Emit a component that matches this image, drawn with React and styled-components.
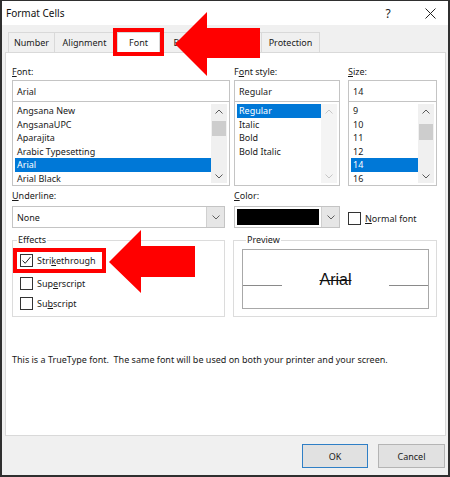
import React from "react";
import styled, { createGlobalStyle } from "styled-components";

const GlobalStyle = createGlobalStyle`
  html, body {
    margin: 0;
    padding: 0;
    background: #fff;
  }
  body {
    font-family: "Noto Sans", "Liberation Sans", sans-serif;
    color: #1a1a1a;
  }
  u {
    text-decoration-thickness: 1px;
    text-underline-offset: 1px;
  }
`;

const Window = styled.div`
  position: relative;
  width: 450px;
  height: 477px;
  box-sizing: border-box;
  border: 2px solid #2f2f2f;
  border-top-width: 1px;
  background: #f0f0f0;
  display: flex;
  flex-direction: column;
  overflow: hidden;
`;

const TitleBar = styled.div`
  height: 24px;
  flex: none;
  background: #fff;
  display: flex;
  align-items: center;
  padding-left: 4px;
  font-size: 10px;
  color: #111;
`;

const TitleText = styled.div`
  flex: 1;
`;

const TitleButton = styled.div`
  width: 36px;
  height: 24px;
  margin-right: ${(p) => p.$mr || 0}px;
  display: flex;
  align-items: center;
  justify-content: center;
  font-size: 12px;
  color: #222;
`;

const Client = styled.div`
  flex: 1;
  display: flex;
  flex-direction: column;
  padding: 0 2px 0 3px;
`;

const TabStrip = styled.div`
  height: 27px;
  flex: none;
  display: flex;
  align-items: flex-end;
  padding-left: 3px;
`;

const Tab = styled.div`
  position: relative;
  width: ${(p) => p.$w}px;
  height: 20px;
  box-sizing: border-box;
  margin: 0 ${(p) => (p.$active ? 2 : 0)}px;
  display: flex;
  align-items: center;
  justify-content: center;
  font-size: 9px;
  color: #1a1a1a;
  background: ${(p) => (p.$active ? "#fff" : "#f0f0f0")};
  border: 1px solid #d9d9d9;
  border-bottom: none;
  border-left-width: ${(p) => (p.$active || p.$first ? 1 : 0)}px;
  z-index: ${(p) => (p.$active ? 2 : 0)};
  outline: ${(p) => (p.$marked ? "4px solid #f00" : "none")};
`;

const Panel = styled.div`
  height: 384px;
  flex: none;
  box-sizing: border-box;
  background: #fff;
  border: 1px solid #d9d9d9;
  padding: 12px 6px 0 6px;
  font-size: 9px;
`;

const Row = styled.div`
  display: flex;
  align-items: flex-start;
  margin-top: ${(p) => p.$mt || 0}px;
`;

const Field = styled.div`
  width: ${(p) => p.$w}px;
  margin-left: ${(p) => p.$ml || 0}px;
  display: flex;
  flex-direction: column;
`;

const Label = styled.div`
  height: 14px;
  line-height: 14px;
  margin-bottom: ${(p) => p.$gap ?? 1}px;
`;

const TextBox = styled.div`
  height: 22px;
  box-sizing: border-box;
  border: 1px solid #c4c4c4;
  padding-left: 4px;
  display: flex;
  align-items: center;
`;

const ListBox = styled.div`
  height: 84px;
  box-sizing: border-box;
  border: 1px solid #c4c4c4;
  border-top: none;
  padding: 2px;
  display: flex;
  overflow: hidden;
`;

const Items = styled.div`
  flex: 1;
  min-width: 0;
`;

const Item = styled.div`
  height: 13.6px;
  line-height: 13.6px;
  padding-left: 2px;
  white-space: nowrap;
  background: ${(p) => (p.$selected ? "#0078d7" : "transparent")};
  color: ${(p) => (p.$selected ? "#fff" : "#1a1a1a")};
`;

const ScrollBar = styled.div`
  width: 16px;
  flex: none;
  display: flex;
  flex-direction: column;
  background: ${(p) => (p.$disabled ? "#f4f4f4" : "#f0f0f0")};
`;

const ScrollButton = styled.div`
  height: 14px;
  flex: none;
  display: flex;
  align-items: center;
  justify-content: center;
`;

const Track = styled.div`
  flex: 1;
  position: relative;
`;

const Thumb = styled.div`
  position: absolute;
  left: 1px;
  right: 1px;
  top: ${(p) => p.$top}px;
  height: ${(p) => p.$h}px;
  background: #cdcdcd;
`;

const Select = styled.div`
  height: 22px;
  box-sizing: border-box;
  border: 1px solid #c4c4c4;
  display: flex;
  align-items: stretch;
`;

const SelectValue = styled.div`
  flex: 1;
  display: flex;
  align-items: center;
  padding: ${(p) => (p.$swatch ? "2px" : "0 0 0 4px")};
`;

const Swatch = styled.div`
  flex: 1;
  align-self: stretch;
  background: #000;
`;

const DropButton = styled.div`
  width: 17px;
  flex: none;
  background: #e6e6e6;
  border-left: 1px solid #d0d0d0;
  display: flex;
  align-items: center;
  justify-content: center;
`;

const CheckRow = styled.div`
  display: flex;
  align-items: center;
  gap: 4px;
  height: ${(p) => p.$h || 16}px;
  margin-left: ${(p) => p.$ml || 0}px;
  margin-top: ${(p) => p.$mt || 0}px;
  padding-left: ${(p) => p.$pl || 0}px;
  align-self: ${(p) => (p.$marked ? "flex-start" : "auto")};
  outline: ${(p) => (p.$marked ? "4px solid #f00" : "none")};
  outline-offset: ${(p) => (p.$marked ? "-4px" : "0")};
  padding-right: ${(p) => (p.$marked ? 10 : 0)}px;
`;

const Box = styled.div`
  width: 13px;
  height: 13px;
  box-sizing: border-box;
  border: 1px solid #333;
  background: #fff;
  flex: none;
  display: flex;
  align-items: center;
  justify-content: center;
`;

const Group = styled.fieldset`
  width: ${(p) => p.$w}px;
  height: ${(p) => p.$h}px;
  box-sizing: border-box;
  margin: 0 0 0 ${(p) => p.$ml || 0}px;
  padding: ${(p) => p.$pad};
  border: 1px solid #dcdcdc;
  display: flex;
  flex-direction: column;
`;

const Legend = styled.legend`
  padding: 0 1px;
  margin-left: 4px;
  font-size: 9px;
  line-height: 12px;
`;

const PreviewBox = styled.div`
  height: 60px;
  box-sizing: border-box;
  border: 1px solid #a8a8a8;
  display: flex;
  align-items: center;
`;

const BaseLine = styled.div`
  width: 39px;
  height: 1px;
  background: #8a8a8a;
  margin-top: 13px;
  flex: none;
`;

const Sample = styled.div`
  flex: 1;
  text-align: center;
  font-family: "Liberation Sans", Arial, sans-serif;
  font-size: 16px;
  color: #111;
  text-decoration: line-through;
  text-decoration-thickness: 1px;
  margin-top: 1px;
`;

const Note = styled.div`
  margin-top: 36px;
  white-space: pre;
  line-height: 14px;
`;

const Footer = styled.div`
  flex: 1;
  display: flex;
  justify-content: flex-end;
  align-items: flex-start;
  gap: 10px;
  padding-top: 8px;
  padding-right: 1px;
`;

const Button = styled.div`
  width: ${(p) => p.$w}px;
  height: 24px;
  box-sizing: border-box;
  background: #e1e1e1;
  border: 1px solid ${(p) => (p.$default ? "#2f7fc6" : "#b4b4b4")};
  display: flex;
  align-items: center;
  justify-content: center;
  font-size: 9px;
  color: #1a1a1a;
`;

const Arrow = styled.svg`
  position: absolute;
  left: 0;
  top: 0;
  pointer-events: none;
  z-index: 5;
`;

const Chevron = ({ up, color = "#606060" }) => (
  <svg width="8" height="5" viewBox="0 0 8 5">
    <polyline
      points={up ? "0.5,4.5 4,1 7.5,4.5" : "0.5,0.5 4,4 7.5,0.5"}
      fill="none"
      stroke={color}
      strokeWidth="1"
    />
  </svg>
);

const Scroll = ({ disabled, thumbTop, thumbH }) => (
  <ScrollBar $disabled={disabled}>
    <ScrollButton>
      <Chevron up color={disabled ? "#c6c6c6" : "#5a5a5a"} />
    </ScrollButton>
    <Track>{!disabled && <Thumb $top={thumbTop} $h={thumbH} />}</Track>
    <ScrollButton>
      <Chevron color={disabled ? "#c6c6c6" : "#5a5a5a"} />
    </ScrollButton>
  </ScrollBar>
);

const CheckBox = ({ checked }) => (
  <Box>
    {checked && (
      <svg width="11" height="11" viewBox="0 0 11 11">
        <polyline
          points="1.5,5.5 4.2,8.3 9.5,2"
          fill="none"
          stroke="#222"
          strokeWidth="1"
        />
      </svg>
    )}
  </Box>
);

const fonts = [
  "Angsana New",
  "AngsanaUPC",
  "Aparajita",
  "Arabic Typesetting",
  "Arial",
  "Arial Black",
];
const styles = ["Regular", "Italic", "Bold", "Bold Italic"];
const sizes = ["9", "10", "11", "12", "14", "16"];

export default function App() {
  return (
    <>
      <GlobalStyle />
      <Window>
        <TitleBar>
          <TitleText>Format Cells</TitleText>
          <TitleButton $mr={6}>?</TitleButton>
          <TitleButton>
            <svg width="11" height="11" viewBox="0 0 11 11">
              <path d="M0.5 0.5 L10.5 10.5 M10.5 0.5 L0.5 10.5" stroke="#222" strokeWidth="1" />
            </svg>
          </TitleButton>
        </TitleBar>

        <Client>
          <TabStrip>
            <Tab $first $w={47}>Number</Tab>
            <Tab $w={60}>Alignment</Tab>
            <Tab $active $marked $w={43}>
              Font
            </Tab>
            <Tab $first $w={52}>Border</Tab>
            <Tab $w={48}>Fill</Tab>
            <Tab $w={58}>Protection</Tab>
          </TabStrip>

          <Panel>
            <Row>
              <Field $w={218}>
                <Label>
                  <u>F</u>ont:
                </Label>
                <TextBox>Arial</TextBox>
                <ListBox>
                  <Items>
                    {fonts.map((f) => (
                      <Item key={f} $selected={f === "Arial"}>
                        {f}
                      </Item>
                    ))}
                  </Items>
                  <Scroll thumbTop={3} thumbH={15} />
                </ListBox>
              </Field>
              <Field $w={106} $ml={4}>
                <Label>
                  F<u>o</u>nt style:
                </Label>
                <TextBox>Regular</TextBox>
                <ListBox>
                  <Items>
                    {styles.map((s) => (
                      <Item key={s} $selected={s === "Regular"}>
                        {s}
                      </Item>
                    ))}
                  </Items>
                  <Scroll disabled />
                </ListBox>
              </Field>
              <Field $w={89} $ml={8}>
                <Label>
                  <u>S</u>ize:
                </Label>
                <TextBox>14</TextBox>
                <ListBox>
                  <Items>
                    {sizes.map((s) => (
                      <Item key={s} $selected={s === "14"}>
                        {s}
                      </Item>
                    ))}
                  </Items>
                  <Scroll thumbTop={6} thumbH={16} />
                </ListBox>
              </Field>
            </Row>

            <Row $mt={3}>
              <Field $w={213}>
                <Label $gap={3}>
                  <u>U</u>nderline:
                </Label>
                <Select>
                  <SelectValue>None</SelectValue>
                  <DropButton>
                    <Chevron />
                  </DropButton>
                </Select>
              </Field>
              <Field $w={106} $ml={9}>
                <Label $gap={3}>
                  <u>C</u>olor:
                </Label>
                <Select>
                  <SelectValue $swatch>
                    <Swatch />
                  </SelectValue>
                  <DropButton>
                    <Chevron />
                  </DropButton>
                </Select>
              </Field>
              <CheckRow $ml={8} $mt={20} $h={18}>
                <CheckBox />
                <span>
                  <u>N</u>ormal font
                </span>
              </CheckRow>
            </Row>

            <Row $mt={6}>
              <Group $w={213} $h={83} $pad="0">
                <Legend>Effects</Legend>
                <CheckRow $marked $h={25} $pl={7} $mt={2}>
                  <CheckBox checked />
                  <span>
                    Stri<u>k</u>ethrough
                  </span>
                </CheckRow>
                <CheckRow $h={20} $pl={7}>
                  <CheckBox />
                  <span>
                    Sup<u>e</u>rscript
                  </span>
                </CheckRow>
                <CheckRow $h={20} $pl={7}>
                  <CheckBox />
                  <span>
                    Su<u>b</u>script
                  </span>
                </CheckRow>
              </Group>
              <Group $w={204} $h={83} $ml={8} $pad="3px 7px 4px 8px">
                <Legend>Preview</Legend>
                <PreviewBox>
                  <BaseLine />
                  <Sample>Arial</Sample>
                  <BaseLine />
                </PreviewBox>
              </Group>
            </Row>

            <Note>
              This is a TrueType font.  The same font will be used on both your printer and your screen.
            </Note>
          </Panel>

          <Footer>
            <Button $w={66} $default>
              OK
            </Button>
            <Button $w={67}>Cancel</Button>
          </Footer>
        </Client>

        <Arrow width="450" height="477" viewBox="0 0 450 477">
          <polygon
            points="173,43 205,11 205,27 258,27 258,57 205,57 205,75"
            fill="#f00"
          />
          <polygon
            points="107,261 139,229 139,245 193,245 193,276 139,276 139,292"
            fill="#f00"
          />
        </Arrow>
      </Window>
    </>
  );
}
